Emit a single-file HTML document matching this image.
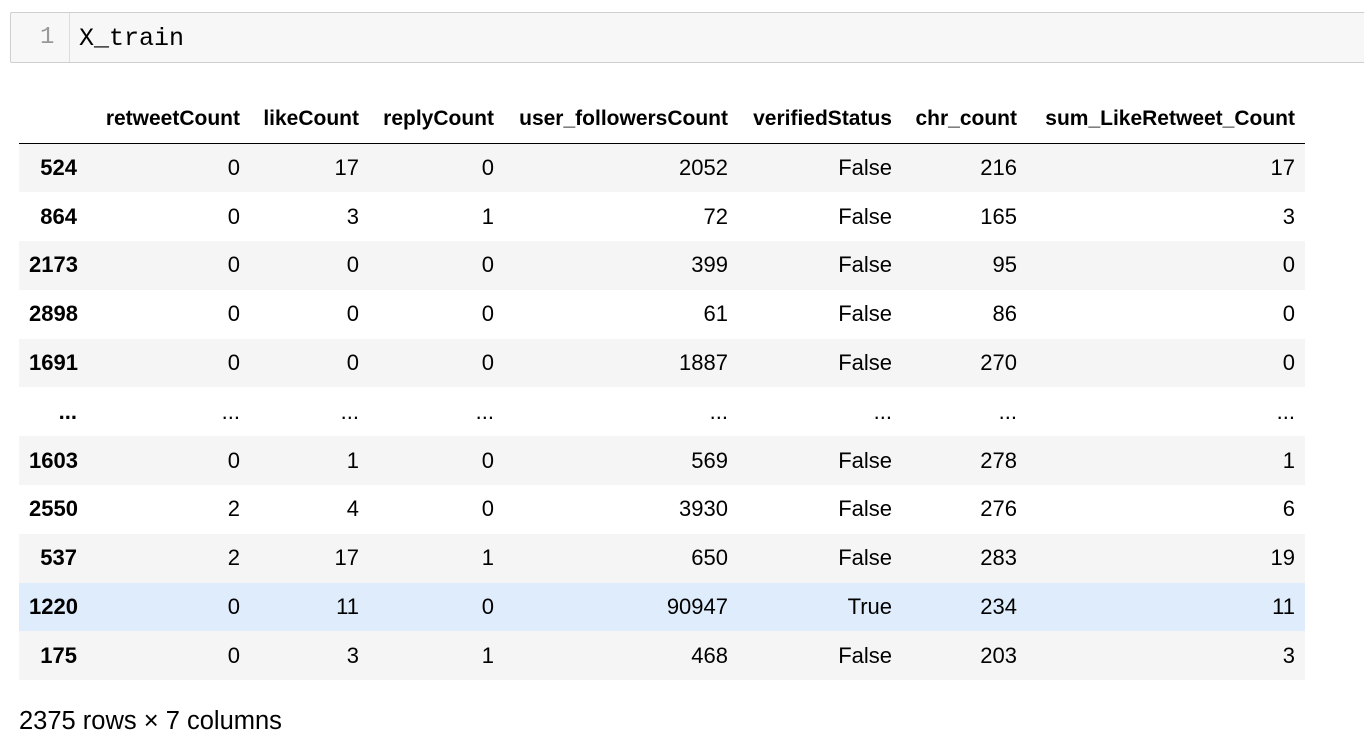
<!DOCTYPE html>
<html><head><style>
body{margin:0;background:#fff;width:1364px;height:744px;overflow:hidden;font-family:"Liberation Sans",Arial,sans-serif;}
.cell{position:absolute;left:10px;top:12px;width:1360px;height:49px;background:#f7f7f7;border:1px solid #cfcfcf;border-radius:2px;}
.gut{position:absolute;left:0;top:0;width:58px;height:49px;border-right:1px solid #ddd;}
.ln{position:absolute;left:29px;top:11px;font:24px "Liberation Mono",monospace;color:#999;}
.code{position:absolute;left:68px;top:11px;font:25px "Liberation Mono",monospace;color:#000;}
table{position:absolute;left:19px;top:95px;width:1286px;border-collapse:collapse;table-layout:fixed;font-size:22px;color:#000;}
td,th{text-align:right;padding:0 10px;white-space:nowrap;overflow:visible;}
th{font-weight:bold;}
thead th{height:48px;border-bottom:1.5px solid #000;vertical-align:middle;font-size:21px;}
tbody tr{height:48.8px;}
tbody tr:nth-child(odd){background:#f5f5f5;}
tbody tr.hl{background:#dfecfb;}
.foot{position:absolute;left:19px;top:707px;font-size:25.5px;}
</style></head><body>
<div class="cell"><div class="gut"><span class="ln">1</span></div><div class="code">X_train</div></div>
<table>
<colgroup><col style="width:68px"><col style="width:163px"><col style="width:119px"><col style="width:135px"><col style="width:234px"><col style="width:164px"><col style="width:125px"><col style="width:278px"></colgroup>
<thead><tr><th></th><th>retweetCount</th><th>likeCount</th><th>replyCount</th><th>user_followersCount</th><th>verifiedStatus</th><th>chr_count</th><th>sum_LikeRetweet_Count</th></tr></thead>
<tbody>
<tr><th>524</th><td>0</td><td>17</td><td>0</td><td>2052</td><td>False</td><td>216</td><td>17</td></tr>
<tr><th>864</th><td>0</td><td>3</td><td>1</td><td>72</td><td>False</td><td>165</td><td>3</td></tr>
<tr><th>2173</th><td>0</td><td>0</td><td>0</td><td>399</td><td>False</td><td>95</td><td>0</td></tr>
<tr><th>2898</th><td>0</td><td>0</td><td>0</td><td>61</td><td>False</td><td>86</td><td>0</td></tr>
<tr><th>1691</th><td>0</td><td>0</td><td>0</td><td>1887</td><td>False</td><td>270</td><td>0</td></tr>
<tr><th>...</th><td>...</td><td>...</td><td>...</td><td>...</td><td>...</td><td>...</td><td>...</td></tr>
<tr><th>1603</th><td>0</td><td>1</td><td>0</td><td>569</td><td>False</td><td>278</td><td>1</td></tr>
<tr><th>2550</th><td>2</td><td>4</td><td>0</td><td>3930</td><td>False</td><td>276</td><td>6</td></tr>
<tr><th>537</th><td>2</td><td>17</td><td>1</td><td>650</td><td>False</td><td>283</td><td>19</td></tr>
<tr class="hl"><th>1220</th><td>0</td><td>11</td><td>0</td><td>90947</td><td>True</td><td>234</td><td>11</td></tr>
<tr><th>175</th><td>0</td><td>3</td><td>1</td><td>468</td><td>False</td><td>203</td><td>3</td></tr>
</tbody></table>
<div class="foot">2375 rows × 7 columns</div>
</body></html>
